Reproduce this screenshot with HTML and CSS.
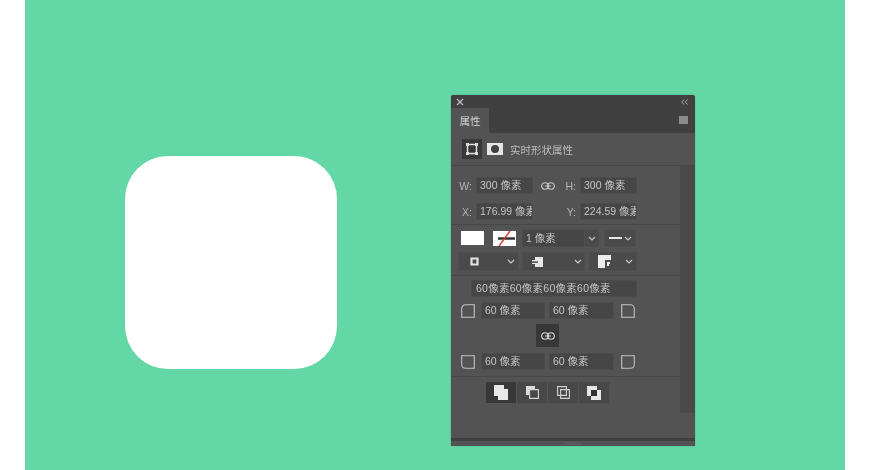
FILE: index.html
```html
<!DOCTYPE html>
<html lang="zh">
<head>
    <meta charset="UTF-8">
    <title>属性</title>
    <link rel="stylesheet" href="styles.css">
</head>
<body>
    <div class="canvas">
        <div class="shape"></div>

        <div class="panel">
            <div class="panel-top">
                <svg width="8" height="8" viewBox="0 0 8 8"><path d="M1 1l6 6M7 1L1 7" stroke="#bdbdbd" stroke-width="1.2"/></svg>
                <svg width="7" height="6" viewBox="0 0 7 6"><path d="M3 .5L.8 3 3 5.500M6.500.5L4.300 3l2.200 2.500" fill="none" stroke="#a8a8a8"/></svg>
            </div>
            <div class="tabs">
                <div class="tab">属性</div>
                <div class="tab-menu"></div>
            </div>

            <div class="body">
                <div class="section head">
                    <div class="mode on">
                        <svg width="12" height="12" viewBox="0 0 12 12"><path d="M1.500 1.500h9v9h-9z" fill="none" stroke="#dcdcdc" stroke-width="1.500"/><path d="M0 0h3v3H0zM9 0h3v3H9zM0 9h3v3H0zM9 9h3v3H9z" fill="#dcdcdc"/></svg>
                    </div>
                    <div class="mask"><span></span></div>
                    <span class="head-label">实时形状属性</span>
                </div>

                <div class="main">
                    <div class="scroll"></div>
                    <div class="content">
                        <div class="section geometry">
                            <div class="row">
                                <label class="lbl">W:</label>
                                <div class="field w55">300 像素</div>
                                <svg class="link" width="14" height="8" viewBox="0 0 14 8"><circle cx="4" cy="4" r="3.300" fill="none" stroke="#c8c8c8" stroke-width="1.100"/><circle cx="10" cy="4" r="3.300" fill="none" stroke="#c8c8c8" stroke-width="1.100"/><path d="M4 4h6" stroke="#c8c8c8" stroke-width="1.100"/></svg>
                                <label class="lbl">H:</label>
                                <div class="field w55">300 像素</div>
                            </div>
                            <div class="row">
                                <label class="lbl">X:</label>
                                <div class="field w55">176.99 像素</div>
                                <label class="lbl lbl-y">Y:</label>
                                <div class="field w55">224.59 像素</div>
                            </div>
                        </div>

                        <div class="section appearance">
                            <div class="row">
                                <div class="swatch"></div>
                                <div class="swatch stroke">
                                    <svg width="23" height="15" viewBox="0 0 23 15"><path d="M5 7.500h17" stroke="#333" stroke-width="2.500"/><path d="M17 0L6 15" stroke="#d8433a" stroke-width="1.500" fill="none"/></svg>
                                </div>
                                <div class="field size">1 像素</div>
                                <div class="drop small"><svg width="8" height="5" viewBox="0 0 8 5"><path d="M1 1l3 3 3-3" fill="none" stroke="#c8c8c8" stroke-width="1.200"/></svg></div>
                                <div class="drop line">
                                    <span class="dash"></span>
                                    <svg width="8" height="5" viewBox="0 0 8 5"><path d="M1 1l3 3 3-3" fill="none" stroke="#c8c8c8" stroke-width="1.200"/></svg>
                                </div>
                            </div>
                            <div class="row">
                                <div class="drop align">
                                    <svg width="9" height="9" viewBox="0 0 9 9"><path d="M1.500 1.500h6v6h-6z" fill="none" stroke="#e4e4e4" stroke-width="2.200"/></svg>
                                    <svg width="8" height="5" viewBox="0 0 8 5"><path d="M1 1l3 3 3-3" fill="none" stroke="#c8c8c8" stroke-width="1.200"/></svg>
                                </div>
                                <div class="drop cap">
                                    <svg width="11" height="12" viewBox="0 0 11 12"><path d="M3 1h8v10H3V8H0V4h3z" fill="#e8e8e8"/><path d="M0 5.500h6v1.200H0z" fill="#222"/></svg>
                                    <svg width="8" height="5" viewBox="0 0 8 5"><path d="M1 1l3 3 3-3" fill="none" stroke="#c8c8c8" stroke-width="1.200"/></svg>
                                </div>
                                <div class="drop join">
                                    <svg width="13" height="13" viewBox="0 0 13 13"><path d="M0 0h13v5H7v8H0z" fill="#eee"/><path d="M9 7h3v2h-1v2H9z" fill="#eee"/></svg>
                                    <svg width="8" height="5" viewBox="0 0 8 5"><path d="M1 1l3 3 3-3" fill="none" stroke="#c8c8c8" stroke-width="1.200"/></svg>
                                </div>
                            </div>
                        </div>

                        <div class="section corners">
                            <div class="field all">60像素60像素60像素60像素</div>
                            <div class="row corner-row">
                                <svg width="14" height="14" viewBox="0 0 14 14"><path d="M.7 13.300V4.500A3.800 3.800 0 0 1 4.500.7h8.800v12.600z" fill="none" stroke="#c4c4c4" stroke-width="1.100"/></svg>
                                <div class="field w62">60 像素</div>
                                <div class="field w63">60 像素</div>
                                <svg width="14" height="14" viewBox="0 0 14 14"><path d="M.7.7h8.800a3.800 3.800 0 0 1 3.800 3.800v8.800H.7z" fill="none" stroke="#c4c4c4" stroke-width="1.100"/></svg>
                            </div>
                            <div class="link-btn">
                                <svg width="14" height="8" viewBox="0 0 14 8"><circle cx="4" cy="4" r="3.300" fill="none" stroke="#d8d8d8" stroke-width="1.100"/><circle cx="10" cy="4" r="3.300" fill="none" stroke="#d8d8d8" stroke-width="1.100"/><path d="M4 4h6" stroke="#d8d8d8" stroke-width="1.100"/></svg>
                            </div>
                            <div class="row corner-row">
                                <svg width="14" height="14" viewBox="0 0 14 14"><path d="M.7.7v8.800a3.800 3.800 0 0 0 3.800 3.800h8.800V.7z" fill="none" stroke="#c4c4c4" stroke-width="1.100"/></svg>
                                <div class="field w62">60 像素</div>
                                <div class="field w63">60 像素</div>
                                <svg width="14" height="14" viewBox="0 0 14 14"><path d="M.7.7v12.600h8.800a3.800 3.800 0 0 0 3.800-3.800V.7z" fill="none" stroke="#c4c4c4" stroke-width="1.100"/></svg>
                            </div>
                        </div>

                        <div class="section ops">
                            <div class="op on"><svg width="14" height="15" viewBox="0 0 14 15"><path d="M0 0h10v4h4v11H4v-4H0z" fill="#e8e8e8"/></svg></div>
                            <div class="op"><svg width="13" height="13" viewBox="0 0 13 13"><path d="M0 0h9v3H3v6H0z" fill="#dcdcdc"/><path d="M3.600 3.600h8.800v8.800H3.600z" fill="none" stroke="#d8d8d8" stroke-width="1.100"/></svg></div>
                            <div class="op"><svg width="13" height="13" viewBox="0 0 13 13"><path d="M.6.6h8.800v8.800H.6zM3.600 3.600h8.800v8.800H3.600z" fill="none" stroke="#d0d0d0" stroke-width="1.100"/></svg></div>
                            <div class="op"><svg width="14" height="14" viewBox="0 0 14 14"><path d="M0 0h10v4h4v10H4v-4H0z" fill="#e8e8e8"/><path d="M4 4h6v6H4z" fill="#333"/></svg></div>
                        </div>
                    </div>
                </div>
            </div>

            <div class="panel-foot"><span class="grip"></span></div>
        </div>
    </div>
</body>
</html>
```

FILE: styles.css
```css
body {
    margin: 0;
    background-color: #fff;
    font-family: "Liberation Sans", "Noto Sans CJK SC", sans-serif;
    overflow: hidden;
}

.canvas {
    position: relative;
    width: 820px;
    height: 470px;
    margin-left: 25px;
    background-color: #64d7a6;
}

.shape {
    position: absolute;
    left: 100px;
    top: 156px;
    width: 212px;
    height: 213px;
    background-color: #fff;
    border-radius: 43px;
}

.panel {
    position: absolute;
    left: 426px;
    top: 95px;
    width: 244px;
    height: 351px;
    display: flex;
    flex-direction: column;
    background-color: #535353;
    border-radius: 3px 3px 0 0;
    color: #c4c4c4;
    font-size: 10.5px;
    box-shadow: 0 0 1px #2f5f4a;
    overflow: hidden;
    filter: blur(0.35px);
}

.panel-top {
    height: 13px;
    flex: none;
    display: flex;
    align-items: center;
    justify-content: space-between;
    padding: 0 7px 0 5px;
    background-color: #404040;
}

.tabs {
    height: 25px;
    flex: none;
    display: flex;
    align-items: stretch;
    justify-content: space-between;
    background-color: #404040;
}

.tab {
    width: 38px;
    display: flex;
    align-items: center;
    justify-content: center;
    background-color: #535353;
    color: #d2d2d2;
}

.tab-menu {
    width: 9px;
    height: 8px;
    margin: 8px 7px 0 0;
    background-color: #8b8b8b;
}

.body {
    flex: 1;
    display: flex;
    flex-direction: column;
}

.section {
    border-bottom: 1px solid #474747;
}

.head {
    height: 32px;
    flex: none;
    display: flex;
    align-items: center;
    padding-left: 11px;
}

.mode {
    width: 20px;
    height: 20px;
    display: flex;
    align-items: center;
    justify-content: center;
}

.mode.on {
    background-color: #383838;
}

.mask {
    width: 16px;
    height: 12px;
    margin-left: 5px;
    display: flex;
    align-items: center;
    justify-content: center;
    background-color: #e6e6e6;
}

.mask span {
    width: 8px;
    height: 8px;
    border-radius: 50%;
    background-color: #404040;
}

.head-label {
    margin-left: 7px;
    color: #bcbcbc;
}

.main {
    flex: 1;
    display: flex;
    flex-direction: row-reverse;
}

.scroll {
    width: 15px;
    height: 247px;
    flex: none;
    background-color: #4a4a4a;
}

.content {
    flex: 1;
    min-width: 0;
}

.row {
    display: flex;
    align-items: center;
}

.field {
    height: 15px;
    line-height: 15px;
    padding-left: 3px;
    box-sizing: border-box;
    flex: none;
    background-color: #464646;
    box-shadow: 0 0 0 1px #4c4c4c;
    color: #c4c4c4;
    white-space: nowrap;
    overflow: hidden;
}

.w55 {
    width: 55px;
}

.w62 {
    width: 62px;
}

.w63 {
    width: 63px;
}

.geometry {
    height: 59px;
    box-sizing: border-box;
    padding-top: 12px;
    display: flex;
    flex-direction: column;
    gap: 11px;
}

.lbl {
    width: 26px;
    padding-right: 5px;
    box-sizing: border-box;
    flex: none;
    text-align: right;
    color: #b4b4b4;
}

.link {
    margin-left: 9px;
    flex: none;
}

.lbl-y {
    margin-left: 23px;
}

.appearance {
    height: 51px;
    box-sizing: border-box;
    padding: 5px 0 0 8px;
    display: flex;
    flex-direction: column;
    gap: 7px;
}

.swatch {
    width: 23px;
    height: 14px;
    margin-left: 2px;
    flex: none;
    background-color: #fff;
}

.swatch.stroke {
    margin-left: 9px;
    height: 15px;
}

.size {
    width: 61px;
    height: 16px;
    line-height: 16px;
    margin-left: 7px;
}

.drop {
    height: 16px;
    display: flex;
    align-items: center;
    justify-content: space-between;
    box-sizing: border-box;
    flex: none;
    background-color: #4a4a4a;
    box-shadow: 0 0 0 1px #4e4e4e;
}

.drop.small {
    width: 13px;
    margin-left: 1px;
    justify-content: center;
}

.drop.line {
    width: 30px;
    margin-left: 7px;
    padding: 0 3px 0 4px;
}

.dash {
    width: 13px;
    height: 2px;
    background-color: #e8e8e8;
}

.drop.align,
.drop.cap,
.drop.join {
    height: 17px;
}

.drop.align {
    width: 59px;
    padding: 0 3px 0 11px;
}

.drop.cap {
    width: 61px;
    margin-left: 5px;
    padding: 0 2px 0 9px;
}

.drop.join {
    width: 46px;
    margin-left: 6px;
    padding: 0 3px 0 8px;
}

.corners {
    height: 101px;
    box-sizing: border-box;
    padding-top: 5px;
}

.all {
    width: 164px;
    margin-left: 21px;
    padding-left: 4px;
    letter-spacing: 0.25px;
}

.corner-row {
    height: 15px;
    padding-left: 10px;
    gap: 6px;
    margin-top: 7px;
}

.corner-row svg:first-child {
    margin-right: 1px;
}

.corner-row svg:last-child {
    margin-left: 2px;
}

.link-btn {
    width: 23px;
    height: 23px;
    margin: 6px 0 0 85px;
    display: flex;
    align-items: center;
    justify-content: center;
    background-color: #383838;
}

.ops {
    padding: 5px 0 0 35px;
    display: flex;
    gap: 1px;
    border-bottom: none;
}

.op {
    width: 30px;
    height: 21px;
    display: flex;
    align-items: center;
    justify-content: center;
    background-color: #484848;
}

.op.on {
    background-color: #383838;
}

.panel-foot {
    height: 8px;
    flex: none;
    display: flex;
    justify-content: center;
    align-items: center;
    border-top: 3px solid #404040;
    box-sizing: border-box;
}

.grip {
    width: 18px;
    height: 3px;
    background-color: #5a5a5a;
}
```
